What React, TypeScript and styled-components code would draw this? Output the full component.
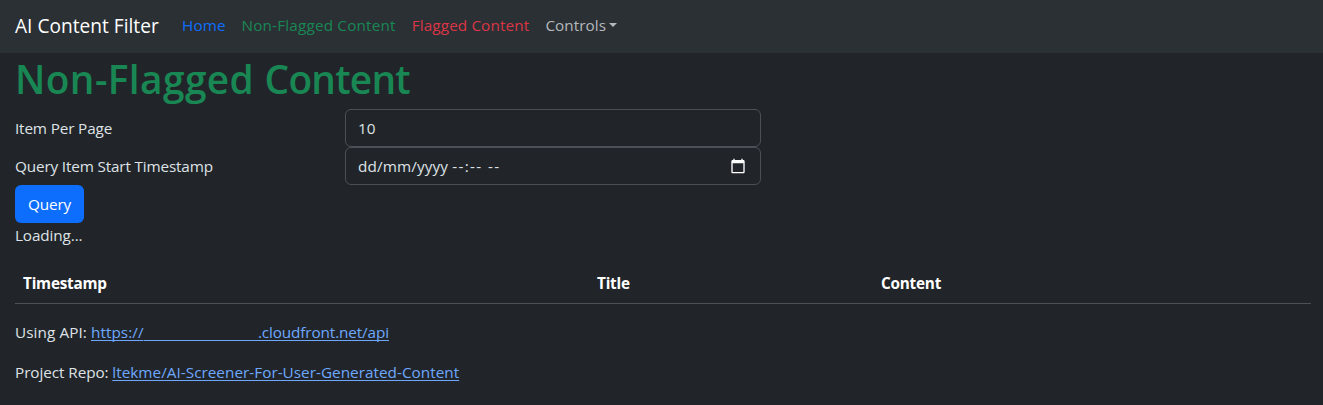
import React from "react";
import styled, { createGlobalStyle } from "styled-components";

const GlobalStyle = createGlobalStyle`
  *, *::before, *::after { box-sizing: border-box; }
  body {
    margin: 0;
    background: #212529;
    color: #dee2e6;
    font-family: "Open Sans", "Noto Sans", sans-serif;
    font-size: 15.3px;
    line-height: 24px;
  }
`;

const Page = styled.div`
  min-height: 405px;
`;

const Navbar = styled.nav`
  display: flex;
  align-items: center;
  height: 53px;
  padding: 0 15px 1px;
  background: #2b3035;
`;

const Brand = styled.a`
  width: 144px;
  margin-right: 15px;
  color: #fff;
  font-size: 19.1px;
  letter-spacing: 0.02px;
  line-height: 30px;
  white-space: nowrap;
`;

const NavLinks = styled.div`
  display: flex;
  padding-bottom: 2px;
`;

const NavLink = styled.a<{ $color: string; $width: number; $track?: number }>`
  display: flex;
  align-items: center;
  box-sizing: content-box;
  width: ${(p) => p.$width}px;
  padding: 0 8px;
  color: ${(p) => p.$color};
  letter-spacing: ${(p) => p.$track ?? 0}px;
  white-space: nowrap;
`;

const Caret = styled.span`
  margin-left: 3px;
  border-top: 4.8px solid;
  border-left: 4.8px solid transparent;
  border-right: 4.8px solid transparent;
`;

const Main = styled.main`
  padding: 0 12px 0 15px;
`;

const Heading = styled.h1`
  margin: 0 0 4px;
  color: #198754;
  font-size: 38.8px;
  font-weight: 600;
  line-height: 52px;
`;

const HeadingWord = styled.span<{ $track: number }>`
  letter-spacing: ${(p) => p.$track}px;
`;

const FormRow = styled.div`
  display: grid;
  grid-template-columns: 330px 416px;
  align-items: center;
  height: 38px;
`;

const Label = styled.label<{ $track: number }>`
  letter-spacing: ${(p) => p.$track}px;
`;

const Field = styled.div`
  display: flex;
  align-items: center;
  height: 38px;
  padding: 0 14px 0 12px;
  border: 1px solid #495057;
  border-radius: 6px;
`;

const DatePart = styled.span<{ $gap?: number; $track?: number }>`
  margin-right: ${(p) => p.$gap ?? 0}px;
  letter-spacing: ${(p) => p.$track ?? 0}px;
`;

const CalendarIcon = styled.svg`
  width: 16px;
  height: 16px;
  margin-left: auto;
  fill: #fff;
`;

const QueryButton = styled.button`
  display: block;
  width: 69px;
  height: 38px;
  padding: 0;
  border: 0;
  border-radius: 6px;
  background: #0d6efd;
  color: #fff;
  font: inherit;
  letter-spacing: -0.16px;
`;

const Status = styled.div`
  margin-bottom: 16px;
  letter-spacing: -0.12px;
`;

const Table = styled.table`
  width: 1296px;
  margin-bottom: 16px;
  border-collapse: separate;
  border-spacing: 0;
  table-layout: fixed;
`;

const Th = styled.th<{ $width: number }>`
  width: ${(p) => p.$width}px;
  height: 41px;
  padding: 8px;
  border-bottom: 1px solid #4d5154;
  color: #fff;
  font-weight: 700;
  letter-spacing: -0.22px;
  text-align: left;
`;

const Paragraph = styled.p`
  margin: 0 0 16px;
  white-space: nowrap;
`;

const Lead = styled.span<{ $width: number; $track: number }>`
  display: inline-block;
  width: ${(p) => p.$width}px;
  letter-spacing: ${(p) => p.$track}px;
`;

const Link = styled.a<{ $track?: number }>`
  color: #6ea8fe;
  letter-spacing: ${(p) => p.$track ?? 0}px;
  text-decoration: underline;
  text-decoration-thickness: 1px;
  text-underline-offset: 2px;
  text-decoration-skip-ink: none;
`;

const HostGap = styled.span`
  display: inline-block;
  width: 114.3px;
  height: 19px;
  border-bottom: 1px solid #6ea8fe;
  vertical-align: -3px;
`;

export default function App() {
  return (
    <Page>
      <GlobalStyle />
      <Navbar>
        <Brand>AI Content Filter</Brand>
        <NavLinks>
          <NavLink $color="#0d6efd" $width={43.5} $track={0.1}>Home</NavLink>
          <NavLink $color="#198754" $width={154.3} $track={0.17}>Non-Flagged Content</NavLink>
          <NavLink $color="#dc3545" $width={117.6} $track={0.1}>Flagged Content</NavLink>
          <NavLink $color="#b5b8bb" $width={76} $track={0.05}>Controls<Caret /></NavLink>
        </NavLinks>
      </Navbar>
      <Main>
        <Heading>
          <HeadingWord $track={0.4}>Non-Flagged </HeadingWord>
          <HeadingWord $track={-0.75}>Content</HeadingWord>
        </Heading>
        <FormRow>
          <Label $track={-0.15}>Item Per Page</Label>
          <Field>10</Field>
        </FormRow>
        <FormRow>
          <Label $track={-0.16}>Query Item Start Timestamp</Label>
          <Field>
            <DatePart $track={0.12} $gap={4}>dd/mm/yyyy</DatePart>
            <DatePart $track={1.35} $gap={5.5}>--:--</DatePart>
            <DatePart $track={1.35}>--</DatePart>
            <CalendarIcon viewBox="0 0 24 24">
              <path d="M20 3h-1V1h-2v2H7V1H5v2H4c-1.1 0-2 .9-2 2v16c0 1.1.9 2 2 2h16c1.1 0 2-.9 2-2V5c0-1.1-.9-2-2-2zm0 18H4V8h16v13z" />
            </CalendarIcon>
          </Field>
        </FormRow>
        <QueryButton>Query</QueryButton>
        <Status>Loading...</Status>
        <Table>
          <thead>
            <tr>
              <Th $width={574}>Timestamp</Th>
              <Th $width={284}>Title</Th>
              <Th $width={438}>Content</Th>
            </tr>
          </thead>
        </Table>
        <Paragraph>
          <Lead $width={76} $track={0.07}>Using API:</Lead>
          <Link $track={0.05}>https://</Link>
          <HostGap />
          <Link $track={-0.12}>.cloudfront.net/api</Link>
        </Paragraph>
        <Paragraph>
          <Lead $width={97.3} $track={-0.07}>Project Repo:</Lead>
          <Link $track={0.025}>ltekme/AI-Screener-For-User-Generated-Content</Link>
        </Paragraph>
      </Main>
    </Page>
  );
}
